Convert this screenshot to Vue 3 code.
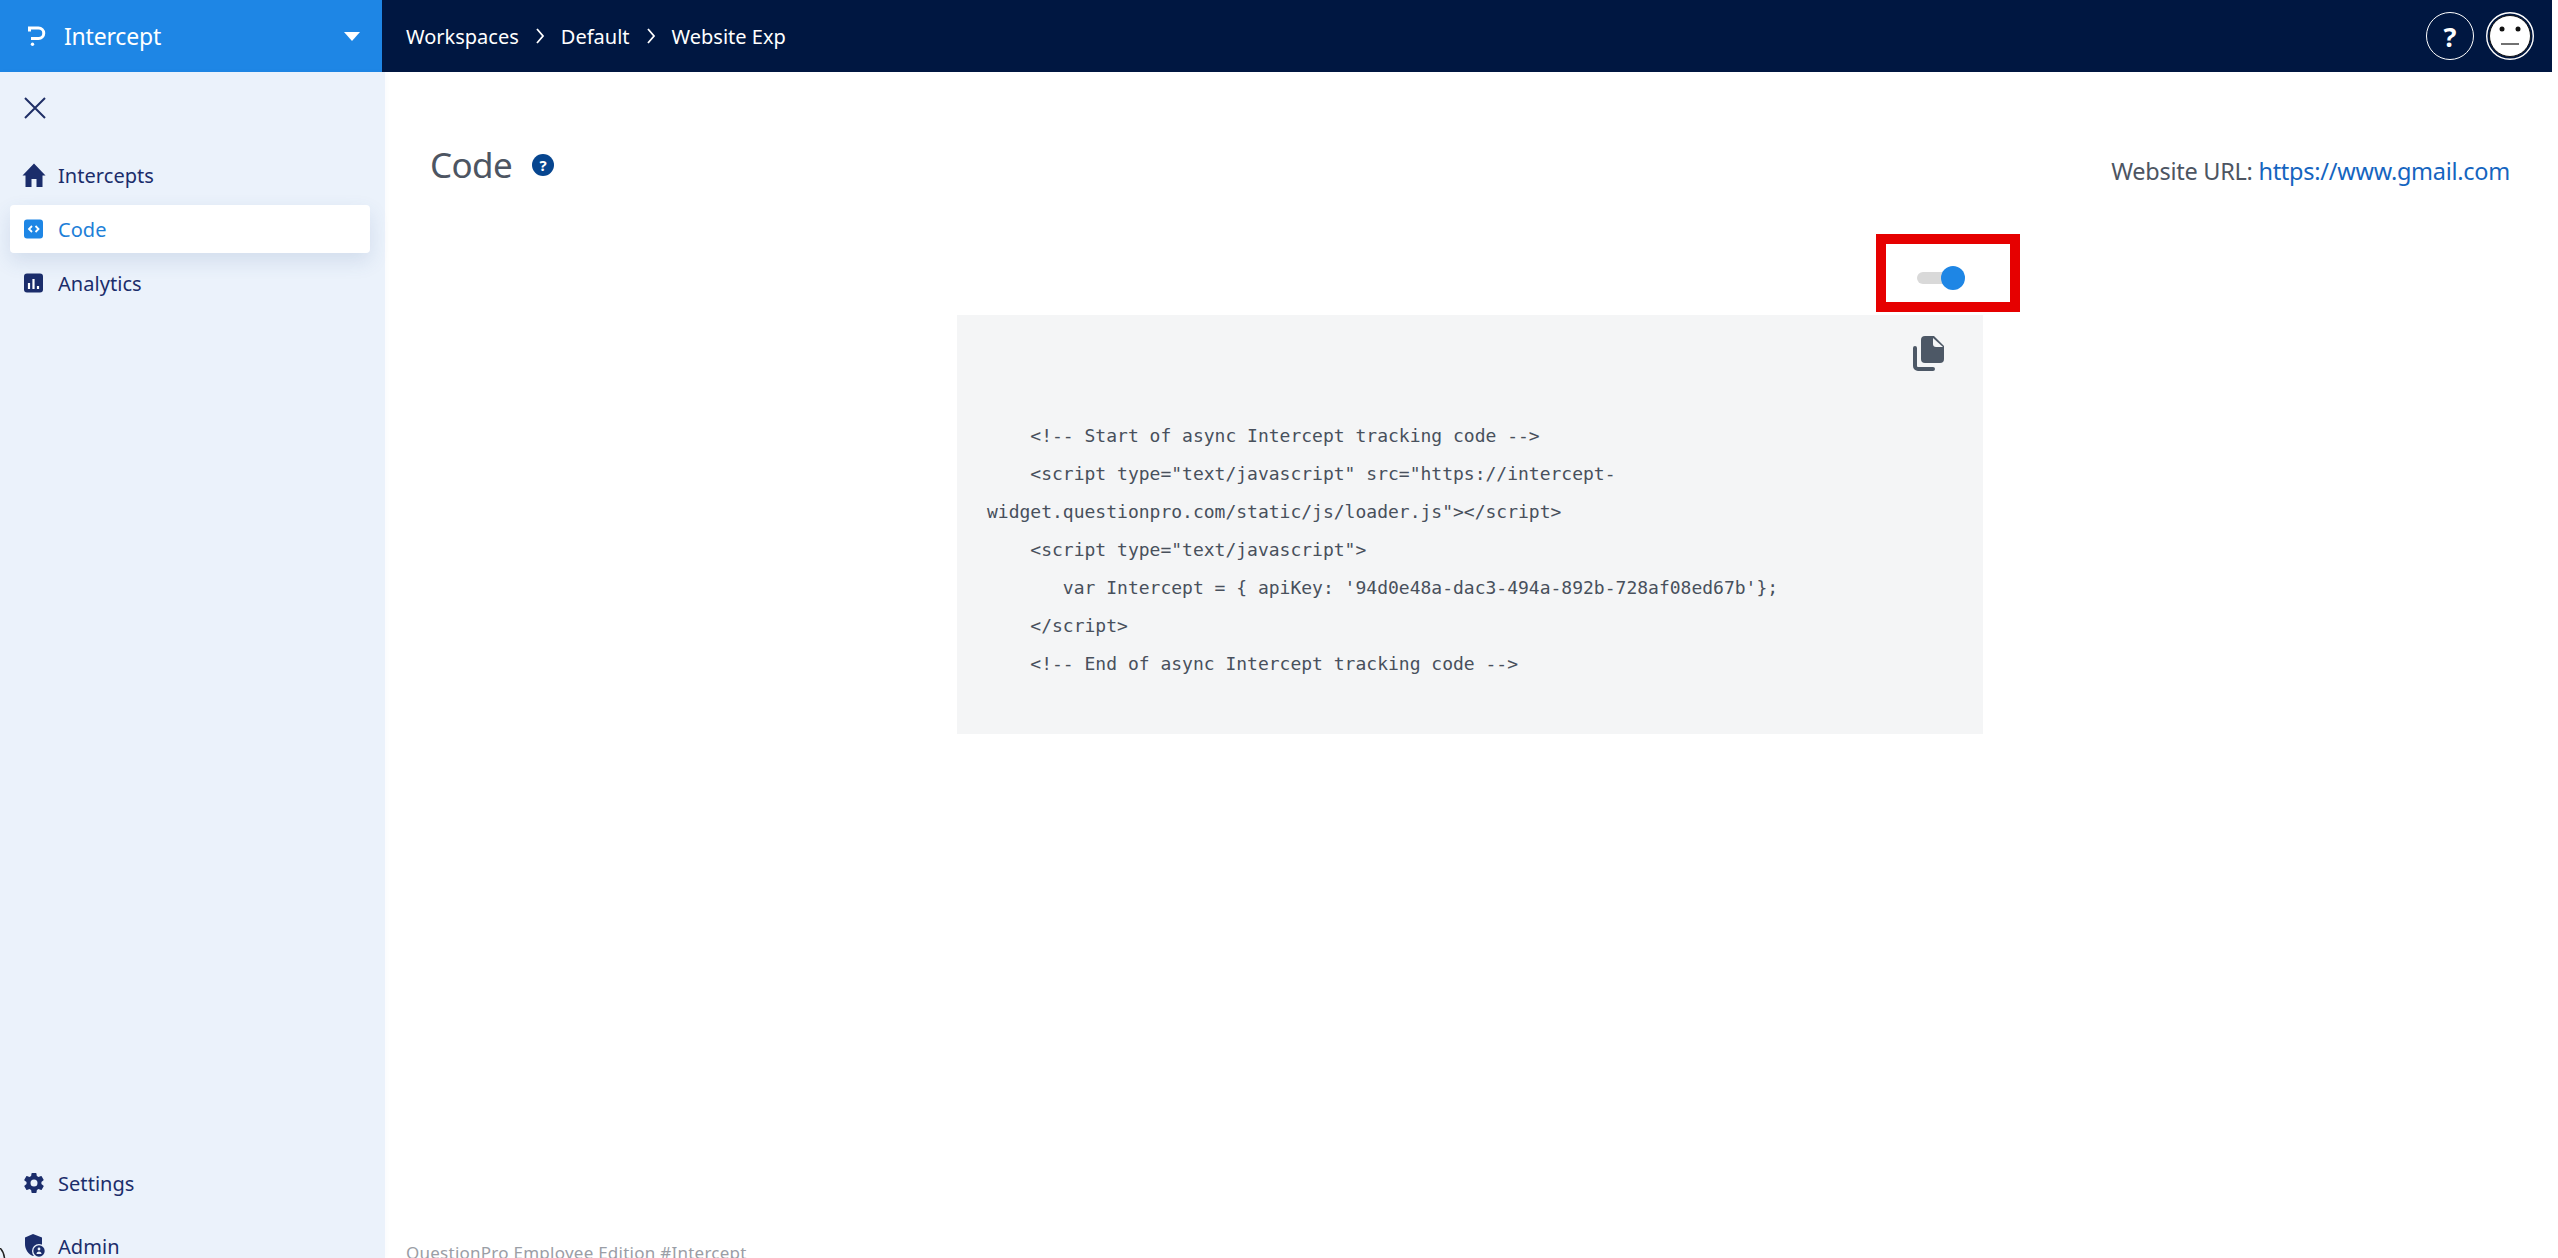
<script setup>
const nav = [
  { label: 'Intercepts', icon: 'home' },
  { label: 'Code', icon: 'code', active: true },
  { label: 'Analytics', icon: 'chart' },
]
const codeLines = [
  '\u00a0\u00a0\u00a0\u00a0<!-- Start of async Intercept tracking code -->',
  '\u00a0\u00a0\u00a0\u00a0<script type="text/javascript" src="https://intercept-widget.questionpro.com/static/js/loader.js"></' + 'script>',
  '\u00a0\u00a0\u00a0\u00a0<script type="text/javascript">',
  "\u00a0\u00a0\u00a0\u00a0\u00a0\u00a0\u00a0var Intercept = { apiKey: '94d0e48a-dac3-494a-892b-728af08ed67b'};",
  '\u00a0\u00a0\u00a0\u00a0</' + 'script>',
  '\u00a0\u00a0\u00a0\u00a0<!-- End of async Intercept tracking code -->',
]
</script>

<template>
  <div class="page">
    <header class="topbar">
      <div class="brand">
        <svg class="logo" viewBox="0 0 20 20" width="20" height="20">
          <path d="M1 2h10.500a5 5 0 0 1 0 10.500H4" fill="none" stroke="#fff" stroke-width="3" />
          <path d="M2.500 2v3.500" fill="none" stroke="#fff" stroke-width="3" />
          <circle cx="5.500" cy="18.200" r="1.700" fill="#fff" />
        </svg>
        <span class="brand-name">Intercept</span>
        <span class="caret"></span>
      </div>
      <nav class="crumbs">
        <span>Workspaces</span>
        <svg class="chev" viewBox="0 0 10 18" width="10" height="18"><path d="M2 2l6 7-6 7" /></svg>
        <span>Default</span>
        <svg class="chev" viewBox="0 0 10 18" width="10" height="18"><path d="M2 2l6 7-6 7" /></svg>
        <span>Website Exp</span>
      </nav>
      <div class="top-actions">
        <div class="help">?</div>
        <svg class="face" viewBox="0 0 48 48" width="48" height="48">
          <circle cx="24" cy="24" r="23.300" fill="none" stroke="#fff" stroke-width="1.400" />
          <circle cx="24" cy="24" r="20.500" fill="#fff" stroke="#111" stroke-width="1" />
          <circle cx="16" cy="17" r="2.500" fill="#111" />
          <circle cx="32" cy="17" r="2.500" fill="#111" />
          <path d="M15 32h18" stroke="#111" stroke-width="1.200" />
        </svg>
      </div>
    </header>

    <div class="body">
      <aside class="sidebar">
        <button class="close" aria-label="Close">
          <svg viewBox="0 0 22 22" width="22" height="22"><path d="M1 1l20 20M21 1L1 21" /></svg>
        </button>
        <ul class="menu">
          <li v-for="item in nav" :key="item.label" class="menu-item" :class="{ active: item.active }">
            <svg class="menu-icon" viewBox="0 0 24 24" width="24" height="24">
              <path v-if="item.icon === 'home'" d="M12 0.500 0.500 12.500H3.500V24h6v-8h5v8h6V12.500h3z" />
              <template v-else-if="item.icon === 'code'">
                <rect x="2" y="2.500" width="19" height="19" rx="3" />
                <path d="M10 9l-3 3 3 3M13.500 9l3 3-3 3" fill="none" stroke="#fff" stroke-width="1.800" />
              </template>
              <template v-else>
                <rect x="2" y="2.500" width="19" height="19" rx="3" />
                <path d="M7 12v6M11.500 8v10M16 15v3" fill="none" stroke="#fff" stroke-width="2.200" />
              </template>
            </svg>
            <span>{{ item.label }}</span>
          </li>
        </ul>
        <ul class="menu bottom">
          <li class="menu-item">
            <svg class="menu-icon" viewBox="0 0 24 24" width="24" height="24">
              <path d="M19.400 13c.04-.33.06-.66.06-1s-.02-.67-.06-1l2.100-1.640a.5.500 0 0 0 .12-.64l-2-3.460a.5.500 0 0 0-.6-.22l-2.500 1a7.300 7.300 0 0 0-1.700-1l-.38-2.640A.5.500 0 0 0 14 2h-4a.5.500 0 0 0-.5.420l-.38 2.640c-.6.25-1.170.6-1.700 1l-2.500-1a.5.500 0 0 0-.6.220l-2 3.460a.5.500 0 0 0 .12.640L4.550 11a7.900 7.900 0 0 0 0 2l-2.100 1.640a.5.500 0 0 0-.12.640l2 3.460c.12.220.38.300.6.220l2.500-1c.53.400 1.100.740 1.700 1l.38 2.640c.04.240.25.420.5.420h4c.25 0 .46-.18.500-.42l.38-2.640c.6-.26 1.170-.6 1.700-1l2.500 1c.22.080.48 0 .6-.22l2-3.460a.5.500 0 0 0-.12-.64zM12 15.500a3.500 3.500 0 1 1 0-7 3.500 3.500 0 0 1 0 7z" />
            </svg>
            <span>Settings</span>
          </li>
          <li class="menu-item">
            <svg class="menu-icon" viewBox="0 0 24 24" width="24" height="24">
              <path d="M11 0 3 3.500V10c0 5.500 3.400 10.300 8 12 1.200-.4 2.300-1.100 3.300-2l5.700-9V3.500z" />
              <circle cx="17" cy="17" r="7" fill="#ebf2fb" />
              <circle cx="17" cy="17" r="5.700" />
              <circle cx="17" cy="15" r="1.400" fill="#ebf2fb" />
              <path d="M14.500 20c0-1.500 1-2.500 2.500-2.500s2.500 1 2.500 2.500z" fill="#ebf2fb" />
            </svg>
            <span>Admin</span>
          </li>
        </ul>
      </aside>

      <main class="content">
        <div class="title-row">
          <div class="title-wrap">
            <h1>Code</h1>
            <span class="qmark">?</span>
          </div>
          <div class="url">Website URL: <a>https://www.gmail.com</a></div>
        </div>

        <div class="code-area">
          <div class="switch-row">
            <div class="switch"><span class="track"></span><span class="knob"></span></div>
            <div class="highlight"></div>
          </div>
          <div class="code-box">
            <div class="copy-row">
              <svg viewBox="0 0 31 35" width="31" height="35">
                <path d="M2 12v18a3 3 0 0 0 3 3h15" fill="none" stroke="#4d5866" stroke-width="4" stroke-linecap="round" />
                <path d="M12 0h9l10 10v13a4 4 0 0 1-4 4H12a4 4 0 0 1-4-4V4a4 4 0 0 1 4-4z" fill="#4d5866" />
                <path d="M20 2v6a3 3 0 0 0 3 3h7z" fill="#f4f5f6" />
              </svg>
            </div>
            <p v-for="(line, i) in codeLines" :key="i" class="code-line">{{ line }}</p>
          </div>
        </div>

        <footer class="foot">QuestionPro Employee Edition #Intercept</footer>
      </main>
    </div>
    <svg class="mark" viewBox="0 0 8 10" width="8" height="10"><path d="M0 0c2 2 4 5 4.500 10" fill="none" stroke="#222" stroke-width="1.500" /></svg>
  </div>
</template>

<style>
html, body { margin: 0; padding: 0; background: #fff; overflow: hidden; }
</style>

<style scoped>
.page {
  position: relative;
  width: 2558px;
  height: 1258px;
  overflow: hidden;
  display: flex;
  flex-direction: column;
  font-family: "Noto Sans", "Open Sans", sans-serif;
  background: #fff;
}
.mark { position: absolute; left: 0; bottom: 0; }
.topbar {
  width: 2552px;
  height: 72px;
  flex: none;
  display: flex;
  align-items: center;
  background: #001741;
  color: #fff;
}
.brand {
  width: 382px;
  height: 72px;
  box-sizing: border-box;
  background: #1e86e5;
  display: flex;
  align-items: center;
  padding: 0 22px 0 27px;
}
.logo { flex: none; }
.brand-name {
  margin-left: 17px;
  font-size: 23px;
  letter-spacing: -0.2px;
  flex: 1;
}
.caret {
  width: 0;
  height: 0;
  border-left: 8px solid transparent;
  border-right: 8px solid transparent;
  border-top: 9px solid #fff;
}
.crumbs {
  display: flex;
  align-items: center;
  margin-left: 24px;
  gap: 16px;
  font-size: 20px;
  letter-spacing: 0;
}
.chev { fill: none; stroke: #fff; stroke-width: 1.800; }
.top-actions {
  margin-left: auto;
  display: flex;
  align-items: center;
  gap: 12px;
  padding-right: 18px;
}
.help {
  width: 48px;
  height: 48px;
  box-sizing: border-box;
  border: 1.500px solid #fff;
  border-radius: 50%;
  display: flex;
  align-items: center;
  justify-content: center;
  font-size: 27px;
  font-weight: 700;
}
.body { flex: 1; display: flex; min-height: 0; }
.sidebar {
  width: 385px;
  flex: none;
  box-sizing: border-box;
  background: #ebf2fb;
  box-shadow: 1px 0 4px rgba(90, 120, 170, 0.04);
  display: flex;
  flex-direction: column;
  padding: 0 15px 0 10px;
  height: 1186px;
}
.close {
  border: 0;
  background: none;
  padding: 0;
  margin: 25px 0 0 14px;
  width: 22px;
  height: 22px;
  display: block;
}
.close svg { display: block; fill: none; stroke: #1f2f66; stroke-width: 2; }
.menu {
  list-style: none;
  margin: 0;
  padding: 0;
  display: flex;
  flex-direction: column;
  gap: 6px;
}
.menu:not(.bottom) { margin-top: 32px; }
.menu.bottom { margin-top: auto; gap: 15px; margin-bottom: -12px; }
.menu-item {
  height: 48px;
  flex: none;
  display: flex;
  align-items: center;
  gap: 12px;
  padding-left: 12px;
  border-radius: 4px;
  font-size: 20px;
  letter-spacing: 0.05px;
  color: #1b2d6b;
}
.menu-icon { flex: none; fill: #1b2d6b; }
.menu-item.active {
  background: #fff;
  color: #1e7fd8;
  box-shadow: 0 8px 20px rgba(60, 90, 150, 0.14);
}
.active .menu-icon { fill: #1e86e5; }
.content {
  flex: 1;
  min-width: 0;
  display: flex;
  flex-direction: column;
  position: relative;
  padding: 0 48px 0 45px;
  box-sizing: border-box;
}
.title-row {
  display: flex;
  justify-content: space-between;
  align-items: flex-start;
  padding-top: 69px;
}
.title-wrap { display: flex; align-items: center; gap: 20px; }
h1 {
  margin: 0;
  font-size: 35px;
  font-weight: 400;
  line-height: 48px;
  color: #4d5562;
  letter-spacing: -0.6px;
}
.qmark {
  width: 22px;
  height: 22px;
  border-radius: 50%;
  background: #06458f;
  color: #fff;
  font-size: 15px;
  font-weight: 700;
  display: flex;
  align-items: center;
  justify-content: center;
}
.url {
  margin-top: 14px;
  font-size: 23.500px;
  line-height: 32px;
  letter-spacing: -0.27px;
  color: #4d5562;
}
.url a { color: #1565c0; }
.code-area { width: 1026px; margin-left: 527px; }
.switch-row { position: relative; height: 49px; margin-top: 77px; }
.switch { position: absolute; left: 960px; top: 0; width: 48px; height: 24px; }
.track {
  position: absolute;
  left: 0;
  top: 6px;
  width: 32px;
  height: 12px;
  border-radius: 6px;
  background: #d9d9d9;
}
.knob {
  position: absolute;
  left: 24px;
  top: 0;
  width: 24px;
  height: 24px;
  border-radius: 50%;
  background: #1e86e5;
}
.highlight {
  position: absolute;
  left: 919px;
  top: -32px;
  width: 144px;
  height: 78px;
  box-sizing: border-box;
  border: 10px solid #e60000;
}
.code-box {
  height: 419px;
  box-sizing: border-box;
  background: #f4f5f6;
  padding: 21px 30px 0;
  font-family: "DejaVu Sans Mono", monospace;
  font-size: 18px;
  line-height: 38px;
  color: #48505c;
}
.copy-row { display: flex; justify-content: flex-end; height: 35px; margin-bottom: 46px; padding-right: 9px; }
.code-line { margin: 0; overflow-wrap: anywhere; word-break: normal; }
.foot {
  margin: auto 0 -7px -24px;
  font-size: 17px;
  line-height: 24px;
  color: #9a9ea6;
  letter-spacing: 0.25px;
}
</style>
